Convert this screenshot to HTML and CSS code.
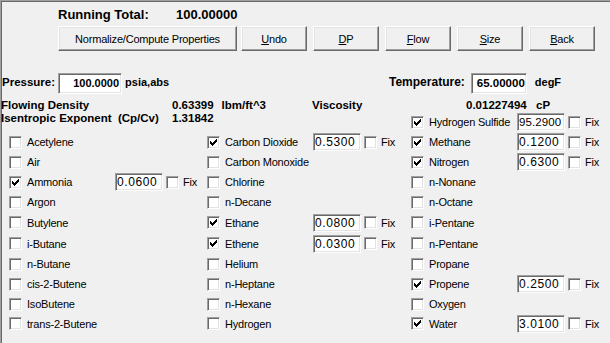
FILE: index.html
```html
<!DOCTYPE html>
<html>
<head>
<meta charset="utf-8">
<link rel="stylesheet" href="styles.css">
</head>
<body>
<div class="frame">
  <div class="header">
    <div class="total"><span class="total-label">Running Total:</span><span>100.00000</span></div>
    <div class="buttons">
      <div class="btn btn-wide">Normalize/Compute Properties</div>
      <div class="btn"><u>U</u>ndo</div>
      <div class="btn"><u>D</u>P</div>
      <div class="btn"><u>F</u>low</div>
      <div class="btn"><u>S</u>ize</div>
      <div class="btn"><u>B</u>ack</div>
    </div>
  </div>

  <div class="conditions">
    <div class="cond-group">
      <span class="cond-label">Pressure:</span>
      <span class="field field-p">100.0000</span>
      <span class="unit unit-p">psia,abs</span>
    </div>
    <div class="cond-group">
      <span class="cond-label">Temperature:</span>
      <span class="field field-t">65.00000</span>
      <span class="unit unit-t">degF</span>
    </div>
  </div>

  <div class="props">
    <span>Flowing Density</span>
    <span>0.63399<span class="prop-unit">lbm/ft^3</span></span>
    <span>Viscosity</span>
    <span>0.01227494</span>
    <span>cP</span>
  </div>

  <div class="grid">
    <div class="iso"><span class="iso-label">Isentropic Exponent&nbsp; (Cp/Cv)</span><span>1.31842</span></div>

    <div class="item c1"><span class="cb"></span><span class="lbl">Acetylene</span></div>
    <div class="item c1"><span class="cb"></span><span class="lbl">Air</span></div>
    <div class="item c1"><span class="cb on"><svg viewBox="0 0 13 13" width="13" height="13"><path d="M9 3h1v1h-1zM8 4h2v1h-2zM3 5h1v1h-1zM7 5h3v1h-3zM3 6h2v1h-2zM6 6h3v1h-3zM3 7h5v1h-5zM4 8h3v1h-3zM5 9h1v1h-1z"/></svg></span><span class="lbl">Ammonia</span><span class="field">0.0600</span><span class="cb fix"></span><span class="fix-lbl">Fix</span></div>
    <div class="item c1"><span class="cb"></span><span class="lbl">Argon</span></div>
    <div class="item c1"><span class="cb"></span><span class="lbl">Butylene</span></div>
    <div class="item c1"><span class="cb"></span><span class="lbl">i-Butane</span></div>
    <div class="item c1"><span class="cb"></span><span class="lbl">n-Butane</span></div>
    <div class="item c1"><span class="cb"></span><span class="lbl">cis-2-Butene</span></div>
    <div class="item c1"><span class="cb"></span><span class="lbl">IsoButene</span></div>
    <div class="item c1"><span class="cb"></span><span class="lbl">trans-2-Butene</span></div>

    <div class="item"><span class="cb on"><svg viewBox="0 0 13 13" width="13" height="13"><path d="M9 3h1v1h-1zM8 4h2v1h-2zM3 5h1v1h-1zM7 5h3v1h-3zM3 6h2v1h-2zM6 6h3v1h-3zM3 7h5v1h-5zM4 8h3v1h-3zM5 9h1v1h-1z"/></svg></span><span class="lbl">Carbon Dioxide</span><span class="field">0.5300</span><span class="cb fix"></span><span class="fix-lbl">Fix</span></div>
    <div class="item"><span class="cb"></span><span class="lbl">Carbon Monoxide</span></div>
    <div class="item"><span class="cb"></span><span class="lbl">Chlorine</span></div>
    <div class="item"><span class="cb"></span><span class="lbl">n-Decane</span></div>
    <div class="item"><span class="cb on"><svg viewBox="0 0 13 13" width="13" height="13"><path d="M9 3h1v1h-1zM8 4h2v1h-2zM3 5h1v1h-1zM7 5h3v1h-3zM3 6h2v1h-2zM6 6h3v1h-3zM3 7h5v1h-5zM4 8h3v1h-3zM5 9h1v1h-1z"/></svg></span><span class="lbl">Ethane</span><span class="field">0.0800</span><span class="cb fix"></span><span class="fix-lbl">Fix</span></div>
    <div class="item"><span class="cb on"><svg viewBox="0 0 13 13" width="13" height="13"><path d="M9 3h1v1h-1zM8 4h2v1h-2zM3 5h1v1h-1zM7 5h3v1h-3zM3 6h2v1h-2zM6 6h3v1h-3zM3 7h5v1h-5zM4 8h3v1h-3zM5 9h1v1h-1z"/></svg></span><span class="lbl">Ethene</span><span class="field">0.0300</span><span class="cb fix"></span><span class="fix-lbl">Fix</span></div>
    <div class="item"><span class="cb"></span><span class="lbl">Helium</span></div>
    <div class="item"><span class="cb"></span><span class="lbl">n-Heptane</span></div>
    <div class="item"><span class="cb"></span><span class="lbl">n-Hexane</span></div>
    <div class="item"><span class="cb"></span><span class="lbl">Hydrogen</span></div>

    <div class="item"><span class="cb on"><svg viewBox="0 0 13 13" width="13" height="13"><path d="M9 3h1v1h-1zM8 4h2v1h-2zM3 5h1v1h-1zM7 5h3v1h-3zM3 6h2v1h-2zM6 6h3v1h-3zM3 7h5v1h-5zM4 8h3v1h-3zM5 9h1v1h-1z"/></svg></span><span class="lbl">Hydrogen Sulfide</span><span class="field field-long">95.2900</span><span class="cb fix"></span><span class="fix-lbl">Fix</span></div>
    <div class="item"><span class="cb on"><svg viewBox="0 0 13 13" width="13" height="13"><path d="M9 3h1v1h-1zM8 4h2v1h-2zM3 5h1v1h-1zM7 5h3v1h-3zM3 6h2v1h-2zM6 6h3v1h-3zM3 7h5v1h-5zM4 8h3v1h-3zM5 9h1v1h-1z"/></svg></span><span class="lbl">Methane</span><span class="field">0.1200</span><span class="cb fix"></span><span class="fix-lbl">Fix</span></div>
    <div class="item"><span class="cb on"><svg viewBox="0 0 13 13" width="13" height="13"><path d="M9 3h1v1h-1zM8 4h2v1h-2zM3 5h1v1h-1zM7 5h3v1h-3zM3 6h2v1h-2zM6 6h3v1h-3zM3 7h5v1h-5zM4 8h3v1h-3zM5 9h1v1h-1z"/></svg></span><span class="lbl">Nitrogen</span><span class="field">0.6300</span><span class="cb fix"></span><span class="fix-lbl">Fix</span></div>
    <div class="item"><span class="cb"></span><span class="lbl">n-Nonane</span></div>
    <div class="item"><span class="cb"></span><span class="lbl">n-Octane</span></div>
    <div class="item"><span class="cb"></span><span class="lbl">i-Pentane</span></div>
    <div class="item"><span class="cb"></span><span class="lbl">n-Pentane</span></div>
    <div class="item"><span class="cb"></span><span class="lbl">Propane</span></div>
    <div class="item"><span class="cb on"><svg viewBox="0 0 13 13" width="13" height="13"><path d="M9 3h1v1h-1zM8 4h2v1h-2zM3 5h1v1h-1zM7 5h3v1h-3zM3 6h2v1h-2zM6 6h3v1h-3zM3 7h5v1h-5zM4 8h3v1h-3zM5 9h1v1h-1z"/></svg></span><span class="lbl">Propene</span><span class="field">0.2500</span><span class="cb fix"></span><span class="fix-lbl">Fix</span></div>
    <div class="item"><span class="cb"></span><span class="lbl">Oxygen</span></div>
    <div class="item"><span class="cb on"><svg viewBox="0 0 13 13" width="13" height="13"><path d="M9 3h1v1h-1zM8 4h2v1h-2zM3 5h1v1h-1zM7 5h3v1h-3zM3 6h2v1h-2zM6 6h3v1h-3zM3 7h5v1h-5zM4 8h3v1h-3zM5 9h1v1h-1z"/></svg></span><span class="lbl">Water</span><span class="field">3.0100</span><span class="cb fix"></span><span class="fix-lbl">Fix</span></div>
  </div>
</div>
</body>
</html>
```
FILE: styles.css
```css
* { box-sizing: border-box; }
html, body { margin: 0; padding: 0; }
body {
  width: 610px;
  height: 343px;
  overflow: hidden;
  background: #f0f0f0;
  font-family: "Liberation Sans", Arial, sans-serif;
  color: #000;
}
.frame {
  height: 343px;
  border-top: 1px solid #a0a0a0;
  border-left: 1px solid #a0a0a0;
  box-shadow: inset 1px 1px 0 #696969;
}

/* header */
.header { padding: 6px 0 0 57px; }
.total { display: flex; font-weight: bold; font-size: 13px; line-height: 16px; }
.total-label { width: 118px; }
.buttons { display: flex; gap: 6px; margin-top: 3px; }
.btn {
  display: flex;
  align-items: center;
  justify-content: center;
  width: 66px;
  height: 25px;
  font-size: 11px;
  letter-spacing: -0.2px;
  background: #f0f0f0;
  border: 1px solid;
  border-color: #fff #696969 #696969 #fff;
  box-shadow: inset -1px -1px 0 #a0a0a0, inset 1px 1px 0 #e3e3e3;
}
.btn-wide { width: 179px; margin-right: -2px; }
.btn u { text-decoration-thickness: 1px; text-underline-offset: 1px; }

/* pressure / temperature */
.conditions { display: flex; margin-top: 22px; height: 21px; }
.cond-group { display: flex; align-items: center; }
.cond-group:first-child { width: 388px; padding-left: 1px; }
.cond-label { font-weight: bold; font-size: 11.5px; margin-bottom: 3px; }
.cond-group + .cond-group .cond-label { font-size: 12px; }
.unit { font-weight: bold; font-size: 11px; margin-bottom: 3px; }
.unit-p { margin-left: 3px; }
.unit-t { margin-left: 8px; }
.field {
  display: block;
  height: 18px;
  width: 48px;
  background: #fff;
  border: 1px solid;
  border-color: #a0a0a0 #fff #fff #a0a0a0;
  box-shadow: inset 1px 1px 0 #696969, inset -1px -1px 0 #e3e3e3;
  font-size: 12px;
  letter-spacing: 0.6px;
  line-height: 16px;
  padding-left: 1px;
  overflow: hidden;
  white-space: nowrap;
}
.field-long { font-size: 11.5px; letter-spacing: 0.1px; padding-left: 1px; }
.field-p {
  width: 64px;
  height: 21px;
  margin-left: 3px;
  font-weight: bold;
  font-size: 11px;
  letter-spacing: 0;
  line-height: 19px;
  text-align: right;
  padding: 0 2px 0 0;
}
.field-t {
  width: 56px;
  height: 21px;
  margin-left: 6px;
  font-size: 11.5px;
  font-weight: bold;
  letter-spacing: 0;
  line-height: 19px;
  text-align: right;
  padding: 0 1px 0 0;
}

/* computed properties */
.props {
  display: grid;
  grid-template-columns: 171px 140px 154px 70px auto;
  margin-top: 5px;
  font-weight: bold;
  font-size: 11.5px;
  line-height: 13px;
  white-space: nowrap;
}
.prop-unit { margin-left: 8px; }

/* component grid */
.grid {
  display: grid;
  grid-template-columns: 206px 204px 1fr;
  grid-template-rows: 20px 20px 20px 20px 20px 21px 21px 20px 20px 20px 19px;
  grid-auto-flow: column;
}
.iso {
  grid-column: 1 / span 2;
  grid-row: 1;
  display: flex;
  align-self: start;
  font-weight: bold;
  font-size: 11.5px;
  line-height: 13px;
  white-space: nowrap;
}
.iso-label { width: 171px; }
.item { display: flex; align-items: center; white-space: nowrap; }
.item.c1 { padding-left: 8px; }
.cb {
  display: block;
  flex: none;
  width: 13px;
  height: 13px;
  background: #fff;
  border: 1px solid;
  border-color: #a0a0a0 #fff #fff #a0a0a0;
  box-shadow: inset 1px 1px 0 #696969, inset -1px -1px 0 #e3e3e3;
}
.cb svg { display: block; margin: -1px 0 0 -1px; shape-rendering: crispEdges; }
.lbl {
  width: 88px;
  margin-left: 5px;
  font-size: 11px;
  letter-spacing: -0.2px;
}
.cb.fix { margin-left: 3px; }
.fix-lbl { margin-left: 4px; font-size: 11px; letter-spacing: -0.2px; }
```
